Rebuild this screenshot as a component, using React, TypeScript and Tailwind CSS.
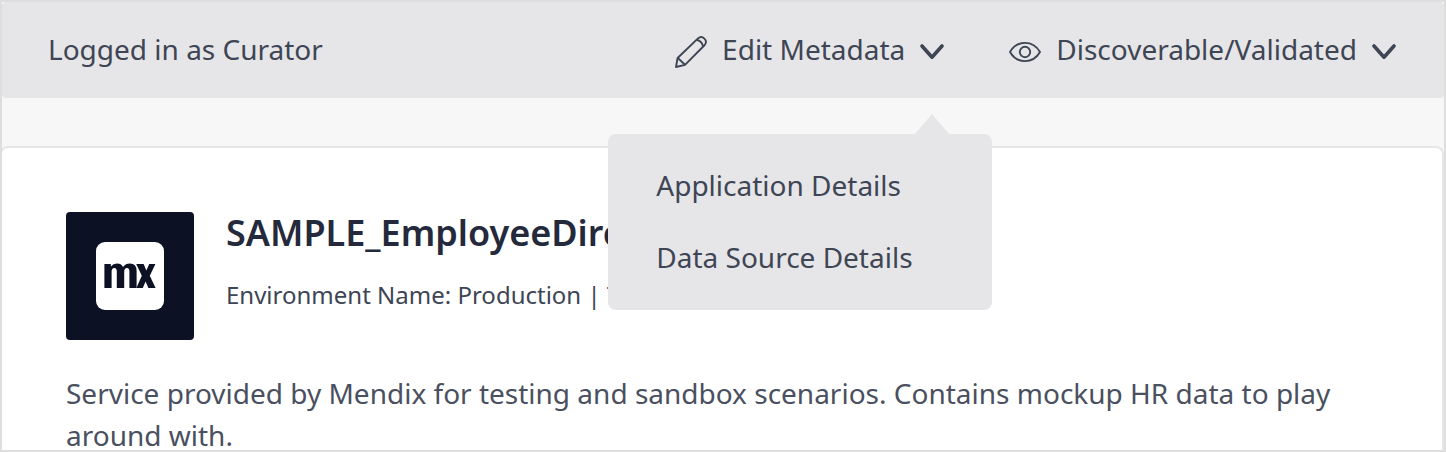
import { useState } from "react";
import type { ReactNode } from "react";

function PencilIcon() {
  return (
    <svg viewBox="0 0 32 32" className="mt-1.5 size-8 shrink-0" fill="none" stroke="currentColor" strokeWidth="1.9" strokeLinejoin="round" aria-hidden="true">
      <path d="M1 31 L2.6 22 L23 2.4 Q26.3 -0.3 29.4 2.6 Q32.4 5.6 29.7 9 L10 28.8 Z" />
      <path d="M2.8 22 L10 28.8" />
      <path d="M21.6 3.8 Q26.8 5 28.2 10.4" />
    </svg>
  );
}

function EyeIcon() {
  return (
    <svg viewBox="0 0 32 32" className="mt-1.5 size-8 shrink-0" fill="none" stroke="currentColor" strokeWidth="1.9" strokeLinejoin="round" aria-hidden="true">
      <path d="M1 16 C4.5 10 9.5 6.9 16 6.9 C22.5 6.9 27.5 10 31 16 C27.5 22 22.5 25.1 16 25.1 C9.5 25.1 4.5 22 1 16 Z" />
      <circle cx="16" cy="16" r="5.2" />
    </svg>
  );
}

function Chevron() {
  return (
    <svg viewBox="0 0 24 16" className="mt-1.5 h-4 w-6 shrink-0" fill="none" stroke="currentColor" strokeWidth="3.6" strokeLinecap="round" strokeLinejoin="round" aria-hidden="true">
      <path d="M2 2 L12 13.2 L22 2" />
    </svg>
  );
}

type MenuButtonProps = { icon: ReactNode; label: string; expanded?: boolean; onClick?: () => void };

function MenuButton({ icon, label, expanded = false, onClick }: MenuButtonProps) {
  return (
    <button type="button" aria-haspopup="menu" aria-expanded={expanded} onClick={onClick} className="flex items-center whitespace-nowrap">
      {icon}
      <span className="mx-[15px]">{label}</span>
      <Chevron />
    </button>
  );
}

export default function App() {
  const [open, setOpen] = useState(true);

  return (
    <div className="flex min-h-screen flex-col overflow-x-hidden border-2 border-[#dedede] bg-[#f7f7f7] font-['Noto_Sans',sans-serif] text-[28px] leading-[42px] text-[#3e4554]">
      <header className="flex h-24 shrink-0 items-center justify-between rounded-sm bg-[#e6e6e8] pr-12 pb-0.5 pl-[46px]">
        <span>Logged in as Curator</span>
        <nav className="flex items-center gap-[65px]">
          <div className="relative">
            <MenuButton icon={<PencilIcon />} label="Edit Metadata" expanded={open} onClick={() => setOpen(!open)} />
            {open && (
              <div role="menu" className="absolute top-full -right-12 z-10 mt-16 w-96 rounded-lg bg-[#e6e6e8] pt-[15px] pb-[17px]">
                <svg viewBox="0 0 34 20" className="absolute right-[43px] bottom-full h-5 w-[34px]" fill="#e6e6e8" aria-hidden="true">
                  <path d="M0 20 L17 0 L34 20 Z" />
                </svg>
                <a href="#application" role="menuitem" className="block px-12 py-[15px]">Application Details</a>
                <a href="#data-source" role="menuitem" className="block px-12 py-[15px]">Data Source Details</a>
              </div>
            )}
          </div>
          <MenuButton icon={<EyeIcon />} label="Discoverable/Validated" />
        </nav>
      </header>

      <main className="mt-12 -ml-0.5 grow rounded-t-lg border-2 border-b-0 border-[#e6e6e8] bg-white px-16 pt-16">
        <div className="flex gap-8">
          <div className="flex size-32 shrink-0 items-center justify-center rounded bg-[#0c1224]">
            <svg viewBox="0 0 68 68" className="size-[68px]" role="img" aria-label="Mendix">
              <rect width="68" height="68" rx="9" fill="#fff" />
              <path fill="#0c1224" d="M8.4 22 H14.8 V24.6 Q17.2 21.6 21 21.6 Q25.4 21.6 27 25 Q29.6 21.6 33.8 21.6 Q40.6 21.6 40.6 29 V46 H33.4 V29.5 Q33.4 26 31 26 Q28.2 26 28.2 30 V46 H20.8 V29.5 Q20.8 26 18.4 26 Q15.6 26 15.6 30 V46 H8.4 Z" />
              <path fill="#0c1224" d="M40.2 22 H47.6 L50.4 28.6 L53.2 22 H59.4 L53.8 33.8 L59.6 46 H52.4 L49.6 39.4 L46.8 46 H40.4 L45.8 33.8 Z" />
            </svg>
          </div>
          <div className="h-32 min-w-0 whitespace-nowrap">
            <h1 className="text-4xl leading-[42px] font-semibold text-[#242a3b]">SAMPLE_EmployeeDirectory</h1>
            <p className="mt-[23px] text-2xl leading-9">Environment Name: Production | Type: OData</p>
          </div>
        </div>
        <p className="-mb-2 pt-8 text-[#4a5060]">
          Service provided by Mendix for testing and sandbox scenarios. Contains mockup HR data to play around with.
        </p>
      </main>
    </div>
  );
}
